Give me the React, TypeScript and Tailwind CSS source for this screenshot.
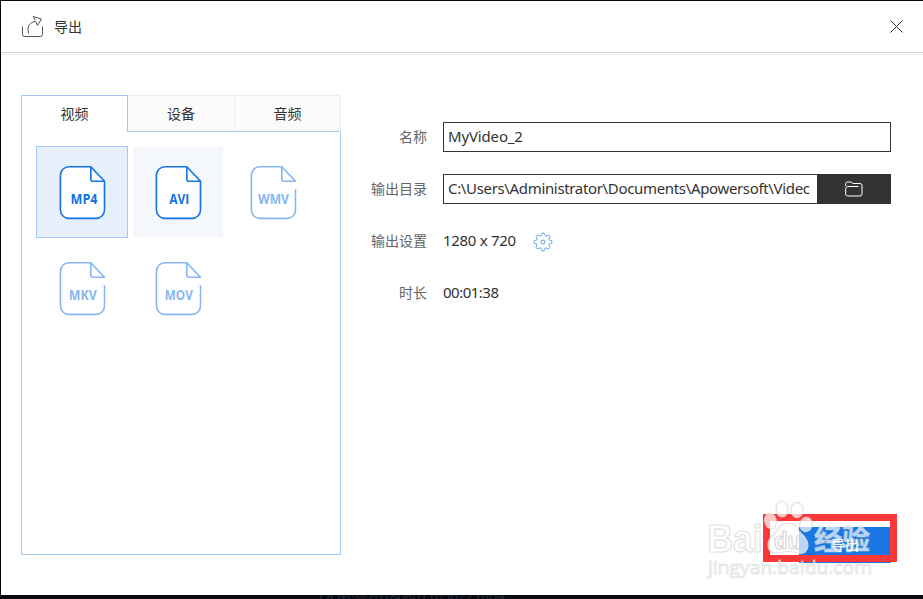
import React from "react";

const cjk = "font-['Noto_Sans','Noto_Sans_CJK_SC',sans-serif]";

function FormatIcon({ label, active, x = 24.6 }: { label: string; active?: boolean; x?: number }) {
  const color = active ? "#1273e6" : "#87b7f3";
  return (
    <svg width="48" height="56" viewBox="0.5 0 48 56" fill="none" stroke={color} strokeWidth="1.6">
      <path
        d={
          active
            ? "M32.3 1.7H10.5A8.6 8.6 0 0 0 1.9 10.3V45A8.6 8.6 0 0 0 10.5 53.4H37.4A8.6 8.6 0 0 0 46 45V16.3Z"
            : "M46 24.3V45A8.6 8.6 0 0 1 37.4 53.4H10.5A8.6 8.6 0 0 1 1.9 45V10.3A8.6 8.6 0 0 1 10.5 1.7H32.3L46 16.3"
        }
        fill="#fff"
        strokeLinejoin="round"
      />
      <path d="M32.3 1.8V14.3Q32.3 16.3 34.4 16.3H46.4" />
      <text
        x={x}
        y="38.7"
        textAnchor="middle"
        fill={color}
        stroke="none"
        className="font-['Open_Sans','Noto_Sans',sans-serif] text-[13.5px] font-bold"
        textLength={label === "AVI" ? 20 : label === "WMV" ? 31 : label === "MP4" ? 27 : 28}
        lengthAdjust="spacingAndGlyphs"
      >
        {label}
      </text>
    </svg>
  );
}

function Tile({ label, kind, x, shift }: { label: string; kind?: "selected" | "hover"; x?: number; shift?: boolean }) {
  const look =
    kind === "selected"
      ? "border-[#a3c8f1] bg-[#e6f0fb]"
      : kind === "hover"
        ? "border-white bg-[#f4f8fd]"
        : "border-white bg-white";
  return (
    <div className={`flex h-[92px] w-[92px] items-center justify-center border pt-px ${shift ? "pr-px" : "pl-px"} ${look}`}>
      <FormatIcon label={label} active={!!kind} x={x} />
    </div>
  );
}

function Field({ label, children }: { label: string; children: React.ReactNode }) {
  return (
    <div className="flex h-[30px] items-center">
      <div className="w-[72px] pr-4 text-right text-sm whitespace-nowrap text-[#666]">{label}</div>
      {children}
    </div>
  );
}

function gearPath() {
  const pts: string[] = [];
  for (let i = 0; i < 8; i++) {
    const a = (i * Math.PI) / 4 - Math.PI / 2;
    const p = (r: number, o: number) =>
      `${(10 + r * Math.cos(a + o)).toFixed(2)} ${(10 + r * Math.sin(a + o)).toFixed(2)}`;
    pts.push(`${i ? "L" : "M"}${p(7.6, -0.2)} Q${p(9.2, -0.19)} ${p(9, 0)} Q${p(9.2, 0.19)} ${p(7.6, 0.2)} Q${p(5.2, 0.39)} ${p(7.6, 0.585)}`);
  }
  return pts.join(" ") + "Z";
}

function Watermark() {
  return (
    <svg
      className="pointer-events-none absolute top-[489px] left-[699px]"
      width="190"
      height="100"
      viewBox="0 0 190 100"
      fill="#fff"
      fillOpacity="0.7"
      stroke="#d9d9d9"
      strokeOpacity="0.8"
      strokeWidth="1.2"
    >
      <text x="7.5" y="62" textLength="55" lengthAdjust="spacingAndGlyphs" className="font-['Liberation_Sans',sans-serif] text-[38px] font-bold">
        Bai
      </text>
      <ellipse cx="82" cy="19" rx="6" ry="8" />
      <ellipse cx="97" cy="20" rx="6.2" ry="7.7" />
      <ellipse cx="70.5" cy="31" rx="5.8" ry="7.8" transform="rotate(-10 70.5 31)" />
      <ellipse cx="106" cy="34.5" rx="6.2" ry="7.2" transform="rotate(12 106 34.5)" />
      <path d="M88 33C81 33 79 38 76 42C72 46 68 49 68 55C68 61 73 64 79 63C85 61 91 61 97 63C104 65 108 61 108 55C108 49 103 45 99 41C96 37 95 33 88 33Z" />
      <text x="74" y="59" textLength="27" lengthAdjust="spacingAndGlyphs" className="font-['Liberation_Sans',sans-serif] text-[23px] font-bold" fillOpacity="0.35" stroke="#cbcbcb">
        du
      </text>
      <text x="114" y="60" textLength="56" lengthAdjust="spacingAndGlyphs" className="font-['Noto_Sans_CJK_SC',sans-serif] text-[28px] font-bold" strokeOpacity="0.4">
        经验
      </text>
      <text x="8" y="84" textLength="164" lengthAdjust="spacingAndGlyphs" className="font-['Open_Sans',sans-serif] text-[19px]" strokeWidth="1" strokeOpacity="0.7">
        jingyan.baidu.com
      </text>
    </svg>
  );
}

export default function App() {
  return (
    <div className={`relative flex h-[599px] w-[923px] flex-col overflow-hidden border-t border-l border-[#08070c] bg-white text-[#333] ${cjk}`}>
      <header className="flex h-[52px] shrink-0 items-center justify-between border-b border-[#d2d2d2] pr-5 pl-5">
        <div className="flex items-center gap-2.5 text-sm">
          <svg width="23" height="23" viewBox="0 0 23 23" fill="none" stroke="#555" strokeWidth="1">
            <path d="M1.5 11.5V19.5Q1.5 21.5 3.5 21.5H19.5Q21.5 21.5 21.5 19.5V11.5" />
            <path d="M7.5 18.5Q4.8 8.2 14.5 6.2L16.5 10.5L20.5 4L12.2 1.5L14 5.2" />
          </svg>
          <span>导出</span>
        </div>
        <svg className="mb-px" width="13" height="13" viewBox="0 0 13 13" stroke="#333" strokeWidth="1">
          <path d="M.5.5L12.5 12.5M12.5.5L.5 12.5" />
        </svg>
      </header>
      <div className="mt-px h-px shrink-0 bg-[#eee]" />
      <main className="flex flex-1 pt-10 pl-5">
        <section className="h-[460px] w-[320px]">
          <div className="flex h-[37px] text-sm">
            <div className="flex w-[107px] items-center justify-center border-t border-r border-l border-[#a3c8f1]">视频</div>
            <div className="flex w-[107px] items-center justify-center border-t border-r border-b border-t-[#eee] border-r-[#eee] border-b-[#a3c8f1] bg-[#fbfbfb]">设备</div>
            <div className="flex w-[106px] items-center justify-center border-t border-r border-b border-t-[#eee] border-r-[#eee] border-b-[#a3c8f1] bg-[#fbfbfb]">音频</div>
          </div>
          <div className="grid h-[423px] grid-cols-[92px_92px_92px] content-start gap-1 border-r border-b border-l border-[#a3c8f1] pt-3.5 pl-3.5">
            <Tile label="MP4" kind="selected" x={25.5} />
            <Tile label="AVI" kind="hover" x={24.8} />
            <Tile label="WMV" x={24} shift />
            <Tile label="MKV" x={24.3} />
            <Tile label="MOV" x={24.3} />
          </div>
        </section>
        <section className="mt-[27px] ml-[30px] flex flex-col gap-[22px]">
          <Field label="名称">
            <div className="flex h-[30px] w-[448px] items-center border border-[#333] pb-0.5 pl-1 text-[15px]">
              <span className="tracking-[-0.15px]">MyVideo_2</span>
            </div>
          </Field>
          <Field label="输出目录">
            <div className="flex h-[30px] w-[448px] border border-[#333]">
              <div className="flex w-[373px] items-center overflow-hidden pb-0.5 pl-1 text-[15px] whitespace-nowrap">
                <span className="tracking-[-0.34px]">C:\Users\Administrator\Documents\Apowersoft\Videc</span>
              </div>
              <div className="flex flex-1 items-center justify-center bg-[#333] pl-px">
                <svg width="18" height="16" viewBox="0 0 18 16" fill="none" stroke="#fff" strokeWidth="1">
                  <path d="M.7 5V2.8Q.7 1 2.5 1H6Q7 1 7.7 2.5H15Q17 2.5 17 4.5V13Q17 15 15 15H2.7Q.7 15 .7 13V7.7Q.7 5.5 2.9 5.5H13.5" />
                </svg>
              </div>
            </div>
          </Field>
          <Field label="输出设置">
            <span className="pb-0.5 text-[15px] tracking-[-0.3px]">1280 x 720</span>
            <svg className="mt-px ml-[17px]" width="20" height="20" viewBox="0 0 20 20" fill="none" stroke="#5c9ff0" strokeWidth="1">
              <path d={gearPath()} />
              <circle cx="10" cy="10" r="2" />
            </svg>
          </Field>
          <Field label="时长">
            <span className="pb-0.5 text-[15px] tracking-[-0.5px]">00:01:38</span>
          </Field>
        </section>
      </main>
      <footer className="flex h-1 shrink-0 overflow-hidden bg-[#0b0a10]">
        <span className="ml-[318px] text-[14px] leading-[2px] tracking-[-0.45px] text-[#1d2a3c]">QQ视频20180801165622.mp4</span>
      </footer>
      <button className="absolute top-[526px] left-[798px] h-9 w-[92px] bg-[#1877e2] text-sm font-medium text-white">导出</button>
      <div className="absolute top-[513px] left-[762px] h-12 w-[134px] border-[7px] border-[#fc3737]" />
      <Watermark />
    </div>
  );
}
